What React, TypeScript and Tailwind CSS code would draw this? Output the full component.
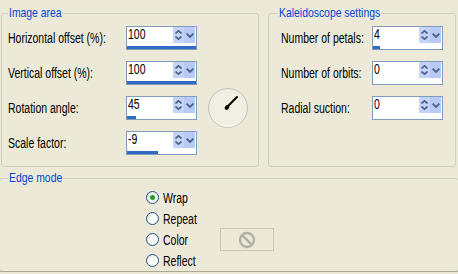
import React from 'react'

type Spin = { label: string; value: number; min: number; max: number }

const imageRows: Spin[] = [
  { label: 'Horizontal offset (%):', value: 100, min: 0, max: 100 },
  { label: 'Vertical offset (%):', value: 100, min: 0, max: 100 },
  { label: 'Rotation angle:', value: 45, min: 0, max: 360 },
  { label: 'Scale factor:', value: -9, min: -100, max: 100 },
]

const kaleidoRows: Spin[] = [
  { label: 'Number of petals:', value: 4, min: 1, max: 31 },
  { label: 'Number of orbits:', value: 0, min: 0, max: 5 },
  { label: 'Radial suction:', value: 0, min: 0, max: 100 },
]

const edgeModes = ['Wrap', 'Repeat', 'Color', 'Reflect']

// the dialog font is tall and narrow, so squeeze Liberation Sans sideways
const Txt: React.FC<{ children: React.ReactNode }> = ({ children }) => (
  <span className="inline-block whitespace-nowrap origin-left scale-x-[0.75]">{children}</span>
)

const Legend: React.FC<{ w: string; ml: string; children: React.ReactNode }> = ({ w, ml, children }) => (
  <legend className={`${ml} ${w} px-[1px] text-[13px] leading-[14px] text-[#0046d5]`}>
    <span className="inline-block whitespace-nowrap origin-left scale-x-[0.8]">{children}</span>
  </legend>
)

const SpinBox: React.FC<{ value: number; min: number; max: number }> = ({ value, min, max }) => {
  const pct = ((value - min) / (max - min)) * 100
  return (
    <div className="w-[71px] h-[24px] border border-[#7f9db9] bg-white flex flex-col">
      <div className="h-[18px] flex items-start">
        <span className="flex-1 pl-[1px] leading-[15px] text-black">
          <Txt>{value}</Txt>
        </span>
        <div className="w-[11px] h-[16px] bg-[#c4d3f8] flex flex-col items-center justify-center gap-[2px]">
          <svg width="7" height="4" viewBox="0 0 7 4">
            <polyline points="0.5,3.5 3.5,0.8 6.5,3.5" fill="none" stroke="#4d6185" strokeWidth="1.6" />
          </svg>
          <svg width="7" height="4" viewBox="0 0 7 4">
            <polyline points="0.5,0.5 3.5,3.2 6.5,0.5" fill="none" stroke="#4d6185" strokeWidth="1.6" />
          </svg>
        </div>
        <div className="w-[11px] h-[16px] bg-[#b7c9f4] flex items-center justify-center">
          <svg width="8" height="5" viewBox="0 0 8 5">
            <polyline points="0.6,0.6 4,4 7.4,0.6" fill="none" stroke="#4d6185" strokeWidth="1.8" />
          </svg>
        </div>
        <div className="w-[1px]" />
      </div>
      <div className="h-[4px] pt-[1px]">
        <div className="h-[3px] bg-[#316ac5]" style={{ width: pct + '%' }} />
      </div>
    </div>
  )
}

const Radio: React.FC<{ checked?: boolean }> = ({ checked }) => (
  <div className="w-[13px] h-[13px] rounded-full border border-[#1c5180] bg-gradient-to-br from-[#dcdcd5] via-white to-white flex items-center justify-center">
    {checked ? <div className="w-[5px] h-[5px] rounded-full bg-[#21a121]" /> : null}
  </div>
)

const Dial = () => (
  <svg width="42" height="42" viewBox="0 0 42 42">
    <circle cx="21" cy="21" r="19.5" fill="#f1efe4" stroke="#c4c2b4" strokeWidth="1" />
    <path d="M6 32 A19.5 19.5 0 0 0 32 36" fill="none" stroke="#ffffff" strokeWidth="1" />
    <line x1="20" y1="20" x2="30" y2="10" stroke="#000" strokeWidth="2" strokeLinecap="round" />
    <ellipse cx="20" cy="20.5" rx="2.6" ry="2" transform="rotate(-45 20 20.5)" fill="#000" />
  </svg>
)

export default function App() {
  return (
    <div className="w-[458px] h-[274px] bg-[#ece9d8] overflow-hidden font-['Liberation_Sans',Arial,sans-serif] text-[14px] text-black">
      <div className="flex pt-[6px] pl-[1px]">
        <fieldset className="w-[258px] h-[161px] border border-[#d0d0bf] rounded-[3px]">
          <Legend ml="ml-[6px]" w="w-[55px]">Image area</Legend>
          <div className="flex pl-[6px] pt-[6px]">
            <div className="grid grid-cols-[118px_71px] gap-y-[11px]">
              {imageRows.map((r) => (
                <React.Fragment key={r.label}>
                  <div className="h-[24px] flex items-center leading-[16px]">
                    <Txt>{r.label}</Txt>
                  </div>
                  <SpinBox value={r.value} min={r.min} max={r.max} />
                </React.Fragment>
              ))}
            </div>
            <div className="ml-[10px] mt-[61px] self-start">
              <Dial />
            </div>
          </div>
        </fieldset>
        <fieldset className="ml-[9px] w-[188px] h-[161px] border border-[#d0d0bf] rounded-[3px]">
          <Legend ml="ml-[9px]" w="w-[103px]">Kaleidoscope settings</Legend>
          <div className="grid grid-cols-[91px_71px] gap-y-[11px] pl-[12px] pt-[6px]">
            {kaleidoRows.map((r) => (
              <React.Fragment key={r.label}>
                <div className="h-[24px] flex items-center leading-[16px]">
                  <Txt>{r.label}</Txt>
                </div>
                <SpinBox value={r.value} min={r.min} max={r.max} />
              </React.Fragment>
            ))}
          </div>
        </fieldset>
      </div>
      <fieldset className="mt-[4px] -ml-px w-[460px] h-[101px] border border-[#d0d0bf] border-b-[#a9a797] rounded-[3px]">
        <Legend ml="ml-[8px]" w="w-[55px]">Edge mode</Legend>
        <div className="flex flex-col pl-[146px] pt-[2px]">
          {edgeModes.map((m, i) => (
            <div key={m} className="h-[21px] flex items-center leading-[16px]">
              <Radio checked={i === 0} />
              <span className="ml-[4px] w-[57px]">
                <Txt>{m}</Txt>
              </span>
              {m === 'Color' ? (
                <div className="w-[54px] h-[23px] border border-[#cac8bb] bg-[#ece9d8] flex items-center justify-center">
                  <svg width="18" height="18" viewBox="0 0 18 18">
                    <circle cx="9" cy="9" r="7" fill="none" stroke="#b3b1a3" strokeWidth="2.4" />
                    <line x1="4.2" y1="4.2" x2="13.8" y2="13.8" stroke="#b3b1a3" strokeWidth="2.4" />
                  </svg>
                </div>
              ) : null}
            </div>
          ))}
        </div>
      </fieldset>
    </div>
  )
}
